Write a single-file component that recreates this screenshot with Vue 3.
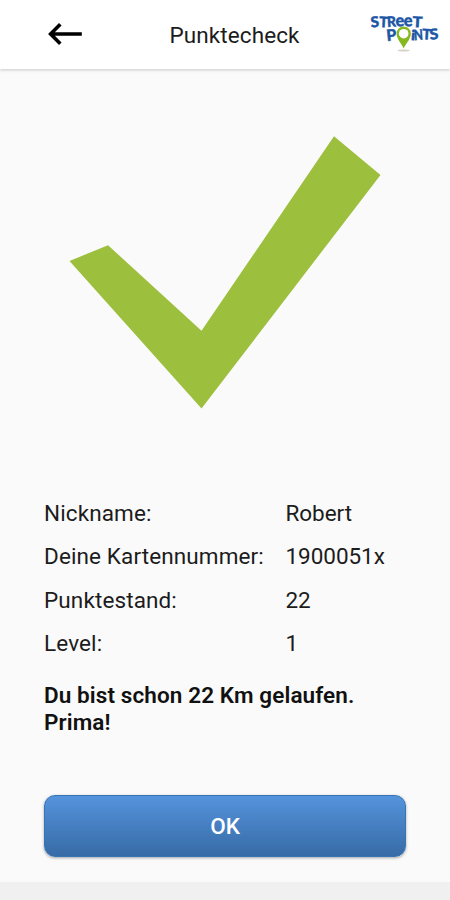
<template>
  <div class="screen">
    <header class="toolbar">
      <button class="back" aria-label="Zurück">
        <svg width="36" height="24" viewBox="0 0 36 24">
          <path d="M33.8 12H3M12.3 2.2L2.6 12l9.700 9.800" />
        </svg>
      </button>
      <h1 class="title">Punktecheck</h1>
      <svg class="logo" width="72" height="46" viewBox="0 0 72 46">
        <text
          v-for="(letter, i) in logoLetters"
          :key="i"
          :transform="`translate(${letter.x} ${letter.y}) rotate(${letter.r})`"
          :font-size="letter.size"
          :textLength="letter.w"
          lengthAdjust="spacingAndGlyphs"
        >{{ letter.t }}</text>
        <ellipse class="shadow" cx="35.7" cy="43.5" rx="6" ry="1" />
        <path class="pin" d="M35.7 41.5C33.5 36.5 28.6 32.5 28.6 26.6a7.1 7.1 0 0 1 14.2 0c0 5.9-4.9 9.9-7.1 14.9z" />
        <circle class="hole" cx="35.7" cy="26.7" r="4.800" />
      </svg>
    </header>

    <main class="content">
      <svg class="check" width="362" height="300" viewBox="0 0 362 300">
        <path d="M25.5 141L64 125.2L157.5 210.7L290 16.2L336.5 55L157.5 288.5z" />
      </svg>

      <dl class="details">
        <div v-for="row in rows" :key="row.label" class="row">
          <dt>{{ row.label }}</dt>
          <dd>{{ row.value }}</dd>
        </div>
      </dl>

      <p class="message">Du bist schon 22 Km gelaufen.<br />Prima!</p>

      <button class="ok">OK</button>
    </main>

    <div class="bottom-bar"></div>
  </div>
</template>

<script setup>
const rows = [
  { label: 'Nickname:', value: 'Robert' },
  { label: 'Deine Kartennummer:', value: '1900051x' },
  { label: 'Punktestand:', value: '22' },
  { label: 'Level:', value: '1' }
];

// Buchstaben des Logos, leicht verdreht. Das "O" ist die Nadel.
const logoLetters = [
  { t: 'S', x: 3, y: 20.5, r: -5, w: 8.5, size: 15 },
  { t: 'T', x: 11, y: 20, r: 3, w: 8.8, size: 14.5 },
  { t: 'R', x: 19.3, y: 20, r: -3, w: 9, size: 14.5 },
  { t: 'e', x: 27.7, y: 19.5, r: -3, w: 8.8, size: 17 },
  { t: 'e', x: 36, y: 19.5, r: -3, w: 8.8, size: 17 },
  { t: 'T', x: 44.3, y: 20, r: 3, w: 10, size: 15 },
  { t: 'P', x: 19, y: 34.3, r: -6, w: 10, size: 16 },
  { t: 'i', x: 42.8, y: 33, r: 4, w: 4.2, size: 14 },
  { t: 'N', x: 46.3, y: 33.2, r: -4, w: 9, size: 14.5 },
  { t: 'T', x: 54, y: 32.3, r: 3, w: 9, size: 14.5 },
  { t: 'S', x: 62, y: 32.8, r: -5, w: 8.8, size: 15 }
];
</script>

<style>
body {
  margin: 0;
  background: #fafafa;
}
</style>

<style scoped>
.screen {
  display: flex;
  flex-direction: column;
  width: 450px;
  height: 900px;
  overflow: hidden;
  background: #fafafa;
  color: #1c1c1c;
  font-family: Roboto, 'Liberation Sans', sans-serif;
}
.toolbar {
  display: grid;
  grid-template-columns: 100px 1fr 100px;
  align-items: center;
  flex: none;
  height: 69px;
  background: #fff;
  box-shadow: 0 1px 3px rgba(0, 0, 0, 0.2);
}
.back {
  display: flex;
  margin: 0 0 1px 48px;
  padding: 0;
  border: none;
  background: none;
}
.back path {
  fill: none;
  stroke: #000;
  stroke-width: 3.6;
}
.title {
  margin: 0 0 0 19px;
  font-size: 22.5px;
  font-weight: 400;
  letter-spacing: 0.1px;
  line-height: 30px;
  text-align: center;
}
.logo {
  justify-self: end;
  align-self: start;
  margin: 7px 10px 0 0;
}
.logo text {
  fill: #1d56a5;
  stroke: #1d56a5;
  stroke-width: 0.4;
  font-family: Lato, sans-serif;
  font-weight: 900;
}
.pin {
  fill: #86b81f;
}
.hole {
  fill: #fff;
}
.shadow {
  fill: #d8d2c4;
}
.logo,
.check {
  overflow: visible;
}
.content {
  flex: 1;
  padding: 51px 44px 0;
}
.check {
  display: block;
}
.check path {
  fill: #9dbf3e;
}
.details {
  margin: 72px 0 0;
}
.row {
  display: flex;
  height: 43.3px;
  font-size: 22.5px;
  line-height: 43px;
  letter-spacing: 0.12px;
  white-space: nowrap;
}
.row dt {
  width: 241.5px;
}
.row dd {
  margin: 0;
  letter-spacing: -0.05px;
}
.message {
  margin: 17px 0 0;
  color: #111;
  font-size: 22.5px;
  font-weight: 600;
  letter-spacing: 0.1px;
  line-height: 26.5px;
}
.ok {
  display: block;
  width: 362px;
  height: 62px;
  margin: 60px 0 0;
  padding: 0;
  border: 1px solid #3675b5;
  border-radius: 11px;
  background: linear-gradient(#5593dc, #376ba6);
  box-shadow: 0 1px 3px rgba(0, 0, 0, 0.35);
  color: #fff;
  font-family: inherit;
  font-size: 22.5px;
  font-weight: 500;
}
.bottom-bar {
  flex: none;
  height: 18px;
  background: #f0f0f0;
}
</style>
